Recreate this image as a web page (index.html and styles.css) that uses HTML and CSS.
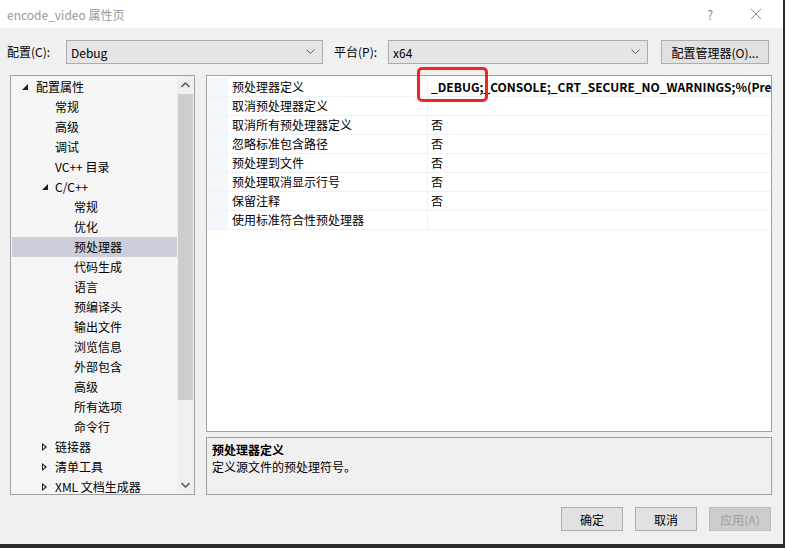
FILE: index.html
```html
<!DOCTYPE html>
<html lang="zh-CN">
<head>
<meta charset="utf-8">
<title>encode_video 属性页</title>
<link rel="stylesheet" href="styles.css">
</head>
<body>
<div class="window">
  <div class="titlebar">
    <span class="title">encode_video 属性页</span>
    <span class="tb-btn help">?</span>
    <span class="tb-btn close"><svg width="12" height="12" viewBox="0 0 12 12"><path d="M1 1L11 11M11 1L1 11" stroke="#8a8a8a" stroke-width="1" fill="none"/></svg></span>
  </div>

  <div class="config-row">
    <span class="lbl lbl-config">配置(C):</span>
    <div class="combo combo-config"><span>Debug</span><svg class="chev" width="9" height="6" viewBox="0 0 9 6"><path d="M0.5 0.5L4.5 4.5L8.5 0.5" stroke="#606060" fill="none"/></svg></div>
    <span class="lbl lbl-platform">平台(P):</span>
    <div class="combo combo-platform"><span>x64</span><svg class="chev" width="9" height="6" viewBox="0 0 9 6"><path d="M0.5 0.5L4.5 4.5L8.5 0.5" stroke="#606060" fill="none"/></svg></div>
    <button class="btn btn-manager">配置管理器(O)...</button>
  </div>

  <div class="content">
    <div class="tree">
      <div class="tree-list">
        <div class="ti l0"><span class="exp"></span>配置属性</div>
        <div class="ti l1">常规</div>
        <div class="ti l1">高级</div>
        <div class="ti l1">调试</div>
        <div class="ti l1">VC++ 目录</div>
        <div class="ti l1e"><span class="exp"></span>C/C++</div>
        <div class="ti l2">常规</div>
        <div class="ti l2">优化</div>
        <div class="ti l2 sel">预处理器</div>
        <div class="ti l2">代码生成</div>
        <div class="ti l2">语言</div>
        <div class="ti l2">预编译头</div>
        <div class="ti l2">输出文件</div>
        <div class="ti l2">浏览信息</div>
        <div class="ti l2">外部包含</div>
        <div class="ti l2">高级</div>
        <div class="ti l2">所有选项</div>
        <div class="ti l2">命令行</div>
        <div class="ti l1e"><span class="col"></span>链接器</div>
        <div class="ti l1e"><span class="col"></span>清单工具</div>
        <div class="ti l1e"><span class="col"></span>XML 文档生成器</div>
      </div>
      <div class="vscroll">
        <div class="sb-arrow"><svg width="9" height="6" viewBox="0 0 9 6"><path d="M0.5 5L4.5 1L8.5 5" stroke="#606060" stroke-width="1.6" fill="none"/></svg></div>
        <div class="sb-track"><div class="sb-thumb"></div></div>
        <div class="sb-arrow"><svg width="9" height="6" viewBox="0 0 9 6"><path d="M0.5 1L4.5 5L8.5 1" stroke="#606060" stroke-width="1.6" fill="none"/></svg></div>
      </div>
    </div>

    <div class="right">
      <div class="grid">
        <div class="row"><div class="gut"></div><div class="name">预处理器定义</div><div class="val bold">_DEBUG;_CONSOLE;_CRT_SECURE_NO_WARNINGS;%(Prep</div></div>
        <div class="row"><div class="gut"></div><div class="name">取消预处理器定义</div><div class="val"></div></div>
        <div class="row"><div class="gut"></div><div class="name">取消所有预处理器定义</div><div class="val">否</div></div>
        <div class="row"><div class="gut"></div><div class="name">忽略标准包含路径</div><div class="val">否</div></div>
        <div class="row"><div class="gut"></div><div class="name">预处理到文件</div><div class="val">否</div></div>
        <div class="row"><div class="gut"></div><div class="name">预处理取消显示行号</div><div class="val">否</div></div>
        <div class="row"><div class="gut"></div><div class="name">保留注释</div><div class="val">否</div></div>
        <div class="row"><div class="gut"></div><div class="name">使用标准符合性预处理器</div><div class="val"></div></div>
        <div class="mark"></div>
      </div>
      <div class="desc">
        <div class="desc-title">预处理器定义</div>
        <div class="desc-text">定义源文件的预处理符号。</div>
      </div>
    </div>
  </div>

  <div class="buttons">
    <button class="btn btn-dlg">确定</button>
    <button class="btn btn-dlg">取消</button>
    <button class="btn btn-dlg disabled">应用(A)</button>
  </div>
</div>
</body>
</html>
```

FILE: styles.css
```css
* { box-sizing: border-box; }
html, body { margin: 0; padding: 0; }
body {
  background: #2b2b2b;
  width: 785px;
  height: 548px;
  overflow: hidden;
  font-family: "Noto Sans CJK SC", "Noto Sans", sans-serif;
  font-size: 12px;
  color: #000;
}
.window {
  width: 783px;
  height: 544px;
  background: #f0f0f0;
  display: flex;
  flex-direction: column;
}
.titlebar {
  height: 28px;
  background: #fff;
  display: flex;
  align-items: center;
  padding-left: 7px;
  color: #9a9a9a;
  font-size: 12px;
}
.title { flex: 1; }
.tb-btn { display: flex; align-items: center; justify-content: center; }
.help { width: 14px; margin-right: 32px; font-size: 13px; color: #8a8a8a; }
.close { width: 14px; margin-right: 20px; }

.config-row {
  margin-top: 12px;
  height: 24px;
  display: flex;
  align-items: center;
  padding-left: 7px;
}
.lbl { line-height: 24px; }
.lbl-config { width: 59px; }
.lbl-platform { width: 54px; margin-left: 11px; }
.combo {
  height: 24px;
  background: #e5e5e5;
  border: 1px solid #acacac;
  display: flex;
  align-items: center;
  justify-content: space-between;
  padding: 0 7px 0 4px;
}
.combo-config { width: 257px; }
.combo-platform { width: 260px; }
.chev { display: block; }
.btn {
  font-family: inherit;
  font-size: 12px;
  background: #e1e1e1;
  border: 1px solid #adadad;
  color: #000;
  padding: 0;
  height: 24px;
}
.btn-manager { width: 108px; margin-left: 13px; }

.content {
  margin-top: 11px;
  display: flex;
  padding-left: 10px;
  height: 420px;
}
.tree {
  width: 185px;
  height: 420px;
  border: 1px solid #a0a0a0;
  background: #f5f5f5;
  display: flex;
}
.tree-list { flex: 1; padding: 1px 0 0 1px; overflow: hidden; }
.ti {
  height: 20px;
  line-height: 20px;
  white-space: nowrap;
  display: flex;
  align-items: center;
  position: relative;
}
.l0 { padding-left: 24px; }
.l1 { padding-left: 43px; }
.l1e { padding-left: 43px; }
.l2 { padding-left: 62px; }
.sel { background: #cccedb; }
.exp {
  position: absolute;
  width: 0; height: 0;
  border-left: 6px solid transparent;
  border-bottom: 6px solid #1e1e1e;
}
.l0 .exp { left: 10px; top: 7px; }
.l1e .exp { left: 30px; top: 7px; }
.col {
  position: absolute;
  left: 30px; top: 6px;
  width: 5px; height: 9px;
}
.col::before {
  content: "";
  position: absolute;
  left: 0; top: 0;
  border-top: 4.5px solid transparent;
  border-bottom: 4.5px solid transparent;
  border-left: 5px solid #1e1e1e;
}
.col::after {
  content: "";
  position: absolute;
  left: 1px; top: 2px;
  border-top: 2.5px solid transparent;
  border-bottom: 2.5px solid transparent;
  border-left: 2.8px solid #f5f5f5;
}
.vscroll {
  width: 17px;
  background: #f0f0f0;
  display: flex;
  flex-direction: column;
}
.sb-arrow {
  height: 18px;
  display: flex;
  align-items: center;
  justify-content: center;
}
.sb-track { flex: 1; position: relative; }
.sb-thumb {
  position: absolute;
  left: 1px; right: 1px;
  top: 0; height: 306px;
  background: #cdcdcd;
}

.right {
  width: 566px;
  margin-left: 11px;
  display: flex;
  flex-direction: column;
}
.grid {
  height: 358px;
  border: 1px solid #a0a0a0;
  background: #fff;
  position: relative;
  padding-top: 2px;
}
.row {
  display: flex;
  height: 19px;
  border-bottom: 1px solid #eef1f6;
}
.gut { width: 21px; background: #f3f6fb; }
.name {
  width: 200px;
  padding-left: 4px;
  line-height: 18px;
  white-space: nowrap;
  border-right: 1px solid #eef1f6;
}
.val {
  flex: 1;
  padding-left: 3px;
  line-height: 18px;
  white-space: nowrap;
  overflow: hidden;
}
.bold { font-weight: bold; }
.mark {
  position: absolute;
  left: 210px;
  top: -9px;
  width: 71px;
  height: 35px;
  border: 3px solid #f52222;
  border-radius: 5px;
}
.desc {
  margin-top: 5px;
  height: 58px;
  border: 1px solid #a0a0a0;
  background: #f0f0f0;
  padding: 3px 5px;
}
.desc-title { font-weight: bold; line-height: 17px; }
.desc-text { line-height: 17px; }

.buttons {
  margin-top: 12px;
  display: flex;
  justify-content: flex-end;
  padding-right: 12px;
  gap: 12px;
}
.btn-dlg { width: 62px; }
.disabled { background: #cccccc; border-color: #bfbfbf; color: #a0a0a0; }
```
